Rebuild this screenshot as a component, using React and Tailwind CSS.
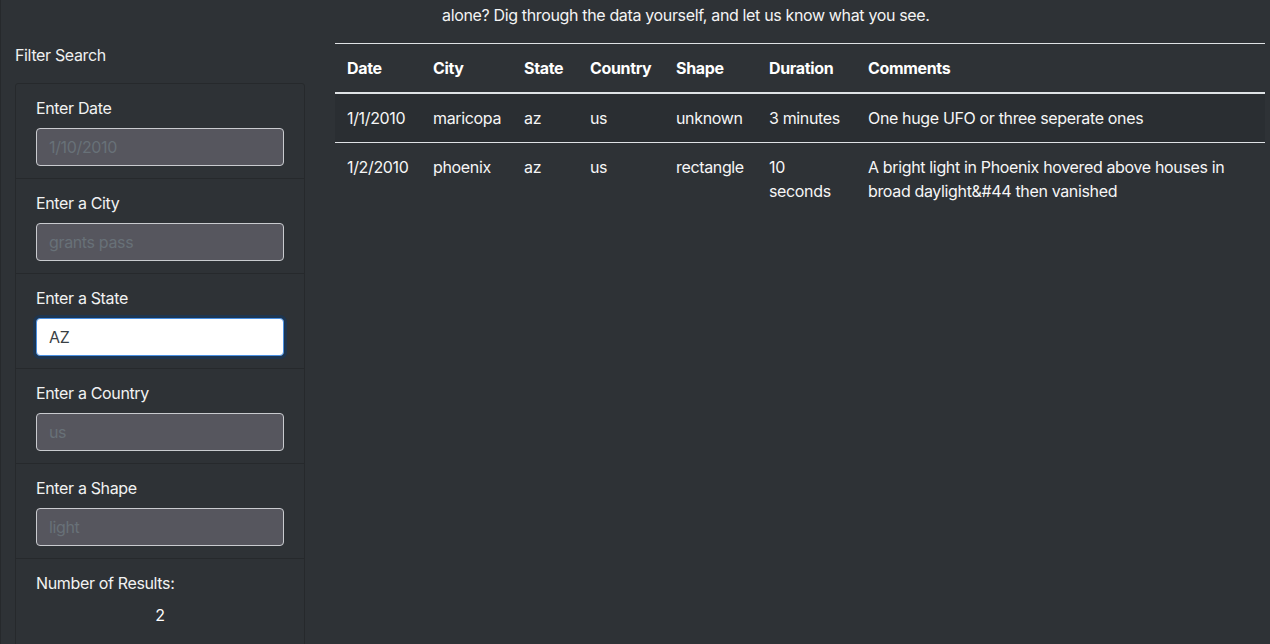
export default function App() {
  const fields = [
    { label: "Enter Date", placeholder: "1/10/2010" },
    { label: "Enter a City", placeholder: "grants pass" },
    { label: "Enter a State", value: "AZ", active: true },
    { label: "Enter a Country", placeholder: "us" },
    { label: "Enter a Shape", placeholder: "light" },
  ];

  const rows = [
    ["1/1/2010", "maricopa", "az", "us", "unknown", "3 minutes", "One huge UFO or three seperate ones"],
    ["1/2/2010", "phoenix", "az", "us", "rectangle", "10 seconds", "A bright light in Phoenix hovered above houses in broad daylight&#44 then vanished"],
  ];

  const cols = [
    { name: "Date", w: "w-[86px]" },
    { name: "City", w: "w-[91px]" },
    { name: "State", w: "w-[66px]" },
    { name: "Country", w: "w-[86px]" },
    { name: "Shape", w: "w-[93px]" },
    { name: "Duration", w: "w-[99px]" },
    { name: "Comments", w: "" },
  ];

  return (
    <div
      className="h-[644px] overflow-hidden bg-[#2e3236] text-white border-l border-[#26292c] text-[16px] leading-6 tracking-[-0.35px]"
      style={{ fontFamily: "Inter, 'Noto Sans', sans-serif" }}
    >
      {/* intro tail */}
      <p className="pt-[3px] pl-[441px] text-[#f4f4f4]">
        alone? Dig through the data yourself, and let us know what you see.
      </p>

      <div className="flex mt-4">
        {/* Filters */}
        <aside className="w-[319px] pl-[14px] pr-[15px] shrink-0">
          <h2 className="text-[#f0f0f0]">Filter Search</h2>
          <ul className="mt-4 border border-[#26292c] rounded-[3px]">
            {fields.map((f) => (
              <li key={f.label} className="px-5 pt-3 pb-3 border-b border-[#26292c]">
                <label className="block text-[#f2f2f2] mb-2">{f.label}</label>
                {f.active ? (
                  <input
                    readOnly
                    value={f.value}
                    className="w-full h-[38px] px-3 rounded-[4px] bg-white text-[#3a3f44] border border-[#4a90e2] outline-none shadow-[0_0_0_3px_#1d3550]"
                  />
                ) : (
                  <input
                    disabled
                    placeholder={f.placeholder}
                    className="w-full h-[38px] px-3 rounded-[4px] bg-[#56565e] border border-[#c9cbcf] placeholder:text-[#687178] outline-none"
                  />
                )}
              </li>
            ))}
            <li className="px-5 pt-3 pb-6">
              <p className="text-[#f2f2f2]">Number of Results:</p>
              <p className="text-center mt-2">2</p>
            </li>
          </ul>
        </aside>

        {/* Table */}
        <main className="flex-1 pl-[15px] pr-[5px]">
          <table className="w-full table-fixed border-collapse text-left">
            <thead>
              <tr className="border-t border-[#dfe2e5] border-b-2">
                {cols.map((c) => (
                  <th key={c.name} className={`${c.w} px-3 py-3 font-bold align-top`}>
                    {c.name}
                  </th>
                ))}
              </tr>
            </thead>
            <tbody>
              {rows.map((r, i) => (
                <tr
                  key={i}
                  className={i === 0 ? "bg-[#2a2e32] border-b border-[#dfe2e5]" : ""}
                >
                  {r.map((cell, j) => (
                    <td key={j} className="px-3 py-3 align-top text-[#f6f6f6]">
                      {cell}
                    </td>
                  ))}
                </tr>
              ))}
            </tbody>
          </table>
        </main>
      </div>
    </div>
  );
}
